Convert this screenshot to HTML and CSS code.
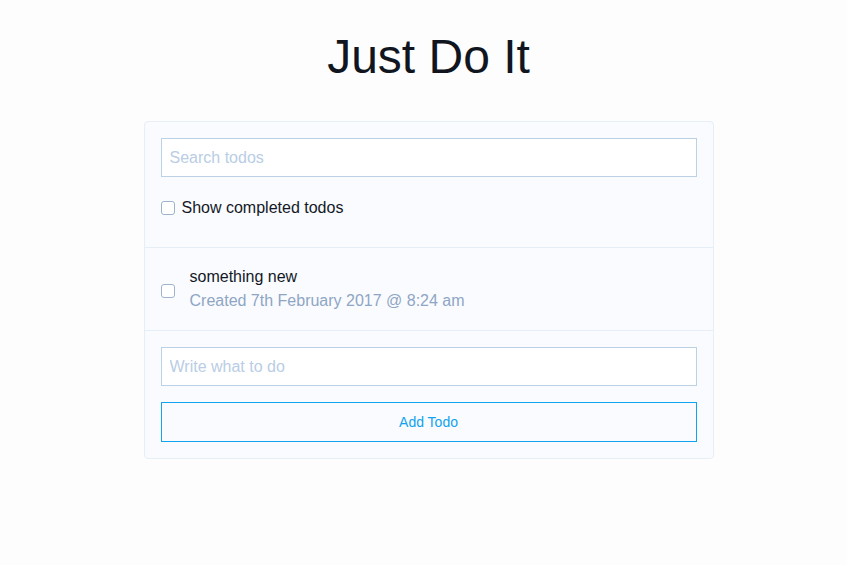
FILE: index.html
```html
<!DOCTYPE html>
<html lang="en">
<head>
<meta charset="utf-8">
<title>Just Do It</title>
<link rel="stylesheet" href="styles.css">
</head>
<body>
<div class="page">
  <h1 class="title">Just Do It</h1>
  <div class="card">
    <div class="section search-section">
      <input class="field" type="text" placeholder="Search todos">
      <label class="check-row">
        <input class="box" type="checkbox">
        <span>Show completed todos</span>
      </label>
    </div>
    <div class="section todo">
      <input class="box" type="checkbox">
      <div class="todo-text">
        <div class="todo-title">something new</div>
        <div class="todo-meta">Created 7th February 2017 @ 8:24 am</div>
      </div>
    </div>
    <div class="section add-section">
      <input class="field" type="text" placeholder="Write what to do">
      <button class="add-btn" type="button">Add Todo</button>
    </div>
  </div>
</div>
</body>
</html>
```
FILE: styles.css
```css
* { box-sizing: border-box; }
html, body { margin: 0; padding: 0; }
body {
  background: #fdfdfd;
  font-family: "Liberation Sans", Arial, sans-serif;
  color: #141826;
}
.page {
  display: flex;
  flex-direction: column;
  align-items: center;
  padding-top: 29px;
  padding-left: 10px;
}
.title {
  margin: 0;
  font-size: 48px;
  font-weight: normal;
  line-height: 56px;
  color: #111520;
}
.card {
  margin-top: 36px;
  width: 570px;
  background: #f9fbfe;
  border: 1px solid #e6eef7;
  border-radius: 4px;
}
.section {
  padding: 16px;
  border-bottom: 1px solid #e6eef7;
}
.section:last-child { border-bottom: none; }
.field {
  display: block;
  width: 100%;
  height: 39px;
  padding: 0 8px;
  border: 1px solid #bcd0e6;
  border-radius: 0;
  background: #fff;
  font-family: inherit;
  font-size: 16px;
  color: #141826;
  outline: none;
}
.field::placeholder { color: #b9cde5; }
.search-section { padding-bottom: 30px; }
.check-row {
  display: flex;
  align-items: center;
  gap: 7px;
  margin-top: 22px;
  font-size: 16px;
  line-height: 18px;
  color: #141826;
}
.box {
  appearance: none;
  -webkit-appearance: none;
  margin: 0;
  width: 14px;
  height: 14px;
  border: 1px solid #9fb3cc;
  border-radius: 3px;
  background: #fff;
  flex: none;
}
.todo {
  display: flex;
  align-items: center;
  gap: 15px;
  padding-top: 19px;
  padding-bottom: 20px;
}
.todo .box { margin-top: 4px; }
.todo-text {
  display: flex;
  flex-direction: column;
  gap: 5px;
}
.todo-title {
  font-size: 16px;
  line-height: 19px;
  color: #141826;
}
.todo-meta {
  font-size: 16px;
  line-height: 19px;
  color: #8ea6c4;
}
.add-btn {
  display: block;
  width: 100%;
  height: 40px;
  margin-top: 16px;
  border: 1px solid #10a3ef;
  background: transparent;
  color: #10a3ef;
  font-family: inherit;
  font-size: 14px;
  cursor: pointer;
}
```
